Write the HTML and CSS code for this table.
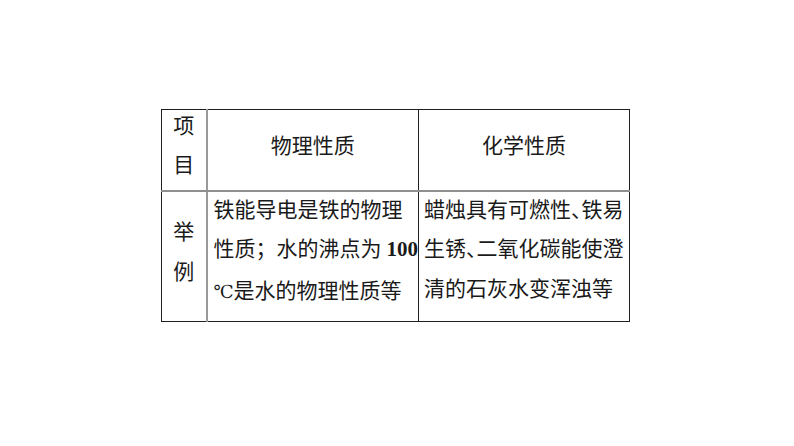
FILE: index.html
```html
<!DOCTYPE html>
<html lang="zh-CN">
<head>
<meta charset="utf-8">
<link rel="stylesheet" href="styles.css">
</head>
<body>
<div class="page">
  <table class="grid">
    <colgroup>
      <col class="c1">
      <col class="c2">
      <col class="c3">
    </colgroup>
    <tr class="head">
      <td class="side"><div class="stack"><span>项</span><span>目</span></div></td>
      <td class="mid title">物理性质</td>
      <td class="right title">化学性质</td>
    </tr>
    <tr class="body">
      <td class="side"><div class="stack2"><span>举</span><span>例</span></div></td>
      <td class="mid text"><div class="lines">铁能导电是铁的物理<br>性质；水的沸点为<b class="num">100</b><br><span class="deg">℃</span>是水的物理性质等</div></td>
      <td class="right text"><div class="lines">蜡烛具有可燃性<span class="dun">、</span>铁易<br>生锈<span class="dun">、</span>二氧化碳能使澄<br>清的石灰水变浑浊等</div></td>
    </tr>
  </table>
</div>
</body>
</html>
```
FILE: styles.css
```css
html, body {
  margin: 0;
  padding: 0;
  background: #ffffff;
}
body {
  width: 794px;
  height: 446px;
  overflow: hidden;
  font-family: "Liberation Serif", "Noto Sans CJK SC", serif;
  color: #1a1a1a;
}
.page {
  padding: 109px 0 0 161px;
}
.grid {
  border-collapse: collapse;
  table-layout: fixed;
  width: 468px;
  border: 1.5px solid #1f1f1f;
  font-size: 21px;
}
.c1 { width: 45px; }
.c2 { width: 212px; }
.c3 { width: 211px; }
.grid td {
  padding: 0;
  vertical-align: middle;
  overflow: visible;
}
.head {
  height: 81px;
}
.head td {
  border-bottom: 2px solid #8f8f8f;
}
.body {
  height: 131px;
}
.side {
  border-right: 2px solid #9a9a9a;
  text-align: center;
  padding-bottom: 12px !important;
}
.mid {
  border-right: 1.5px solid #1f1f1f;
}
.title {
  text-align: center;
  padding-bottom: 12px !important;
  font-family: "Noto Sans CJK SC", sans-serif;
}
.stack, .stack2 {
  display: flex;
  flex-direction: column;
  align-items: center;
  font-family: "Noto Sans CJK SC", sans-serif;
  line-height: 21px;
}
.stack { gap: 18.5px; }
.stack2 { gap: 19px; }
.text {
  vertical-align: top !important;
  padding: 0 0 0 6px !important;
  white-space: nowrap;
}
.right.text { padding-left: 5px !important; }
.lines {
  margin-top: -3px;
  line-height: 39.5px;
  font-family: "Noto Sans CJK SC", sans-serif;
}
.dun {
  font-feature-settings: "halt";
}
.num {
  font-family: "Liberation Serif", serif;
  font-weight: bold;
  font-size: 21px;
  margin-left: 5px;
}
.deg {
  display: inline-block;
  width: 20px;
  font-family: "Liberation Serif", "DejaVu Serif", serif;
  font-size: 18px;
}
```
